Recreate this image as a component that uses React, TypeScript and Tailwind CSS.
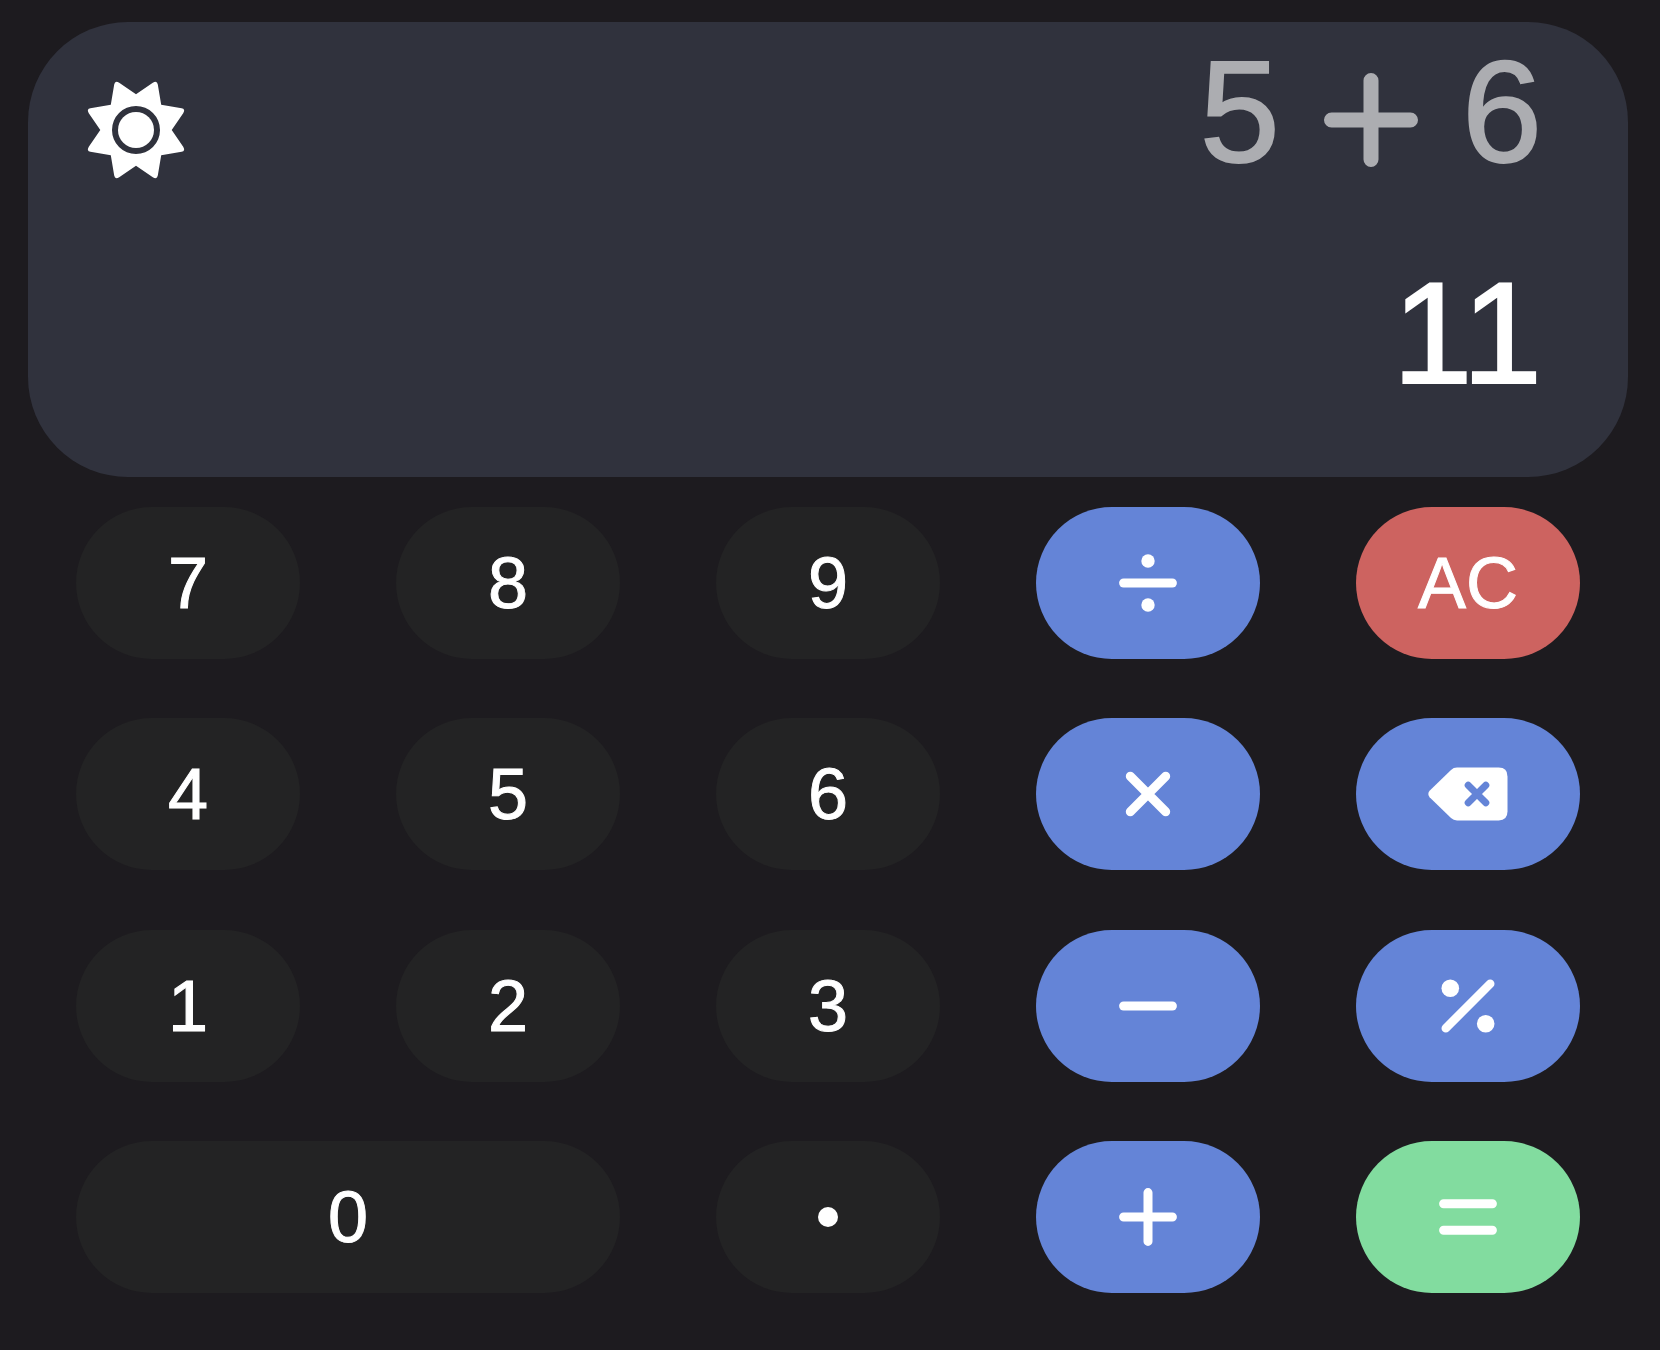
import type { ReactNode } from "react";

type Tone = "digit" | "operator" | "clear" | "equals";

type KeyDef = {
  label: string;
  content: ReactNode;
  tone: Tone;
  wide?: boolean;
};

const tones: Record<Tone, string> = {
  digit: "bg-[#232324]",
  operator: "bg-[#6484d7]",
  clear: "bg-[#cd6360]",
  equals: "bg-[#82dc9f]",
};

function Glyph({ children }: { children: ReactNode }) {
  return (
    <svg
      viewBox="-44 -44 88 88"
      className="size-[88px]"
      fill="none"
      stroke="currentColor"
      strokeWidth={9}
      strokeLinecap="round"
      strokeLinejoin="round"
      aria-hidden="true"
    >
      {children}
    </svg>
  );
}

const divide = (
  <Glyph>
    <path d="M-24.4 0H24.4" />
    <circle cy={-22} r={6.7} fill="currentColor" stroke="none" />
    <circle cy={22} r={6.7} fill="currentColor" stroke="none" />
  </Glyph>
);

const multiply = (
  <Glyph>
    <path d="M-17.7 -17.7L17.7 17.7M17.7 -17.7L-17.7 17.7" />
  </Glyph>
);

const minus = (
  <Glyph>
    <path d="M-24.4 0H24.4" />
  </Glyph>
);

const plus = (
  <Glyph>
    <path d="M-24.4 0H24.4M0 -24.4V24.4" />
  </Glyph>
);

const percent = (
  <Glyph>
    <path d="M-22.2 22.2L22.2 -22.2" strokeWidth={8.6} />
    <circle cx={-17.7} cy={-17.7} r={8.8} fill="currentColor" stroke="none" />
    <circle cx={17.7} cy={17.7} r={8.8} fill="currentColor" stroke="none" />
  </Glyph>
);

const equals = (
  <Glyph>
    <path d="M-24.4 -13.2H24.4M-24.4 13.2H24.4" />
  </Glyph>
);

const point = (
  <Glyph>
    <circle r={10} fill="currentColor" stroke="none" />
  </Glyph>
);

const backspace = (
  <Glyph>
    <path
      d="M-11 -26.4H30.7Q39.5 -26.4 39.5 -17.6V17.6Q39.5 26.4 30.7 26.4H-11Q-14.5 26.4 -17 24L-38.4 3.2Q-41 0 -38.4 -3.2L-17 -24Q-14.5 -26.4 -11 -26.4Z"
      fill="currentColor"
      stroke="none"
    />
    <path d="M0.2 -8.8L17.8 8.8M17.8 -8.8L0.2 8.8" stroke="#6484d7" strokeWidth={7} />
  </Glyph>
);

const keys: KeyDef[] = [
  { label: "7", content: "7", tone: "digit" },
  { label: "8", content: "8", tone: "digit" },
  { label: "9", content: "9", tone: "digit" },
  { label: "Divide", content: divide, tone: "operator" },
  { label: "AC", content: "AC", tone: "clear" },
  { label: "4", content: "4", tone: "digit" },
  { label: "5", content: "5", tone: "digit" },
  { label: "6", content: "6", tone: "digit" },
  { label: "Multiply", content: multiply, tone: "operator" },
  { label: "Backspace", content: backspace, tone: "operator" },
  { label: "1", content: "1", tone: "digit" },
  { label: "2", content: "2", tone: "digit" },
  { label: "3", content: "3", tone: "digit" },
  { label: "Subtract", content: minus, tone: "operator" },
  { label: "Percent", content: percent, tone: "operator" },
  { label: "0", content: "0", tone: "digit", wide: true },
  { label: "Decimal point", content: point, tone: "digit" },
  { label: "Add", content: plus, tone: "operator" },
  { label: "Equals", content: equals, tone: "equals" },
];

function SunIcon() {
  return (
    <svg viewBox="-48 -48 96 96" className="size-24 overflow-visible" aria-hidden="true">
      <path
        fill="currentColor"
        fillRule="evenodd"
        d="M0 -35.7L16.8 -47.2Q21 -49.8 21.8 -45.6L25.2 -25.2L45.6 -21.8Q49.8 -21 47.2 -16.8L35.7 0L47.2 16.8Q49.8 21 45.6 21.8L25.2 25.2L21.8 45.6Q21 49.8 16.8 47.2L0 35.7L-16.8 47.2Q-21 49.8 -21.8 45.6L-25.2 25.2L-45.6 21.8Q-49.8 21 -47.2 16.8L-35.7 0L-47.2 -16.8Q-49.8 -21 -45.6 -21.8L-25.2 -25.2L-21.8 -45.6Q-21 -49.8 -16.8 -47.2ZM24 0A24 24 0 1 0 -24 0A24 24 0 1 0 24 0Z"
      />
      <circle r={18} fill="currentColor" />
    </svg>
  );
}

function Display() {
  return (
    <section
      aria-label="Display"
      className="flex items-start justify-between rounded-[100px] bg-[#30323d] pr-[86px] pb-[71px] pl-[60px]"
    >
      <button type="button" aria-label="Switch theme" className="mt-[60px]">
        <SunIcon />
      </button>
      <div className="flex flex-col items-end gap-[77px] pt-[19px] text-[144px] leading-none [-webkit-text-stroke:2px_currentColor]">
        <p className="flex items-end text-[#acadb1]">
          <span>5</span>
          <svg
            viewBox="-65 -65 130 130"
            className="mx-[26px] size-[130px]"
            fill="none"
            stroke="currentColor"
            strokeWidth={15}
            strokeLinecap="round"
            role="img"
            aria-label="plus"
          >
            <path d="M-39.5 0H39.5M0 -39.5V39.5" />
          </svg>
          <span>6</span>
        </p>
        <output>11</output>
      </div>
    </section>
  );
}

export default function App() {
  return (
    <main className="flex min-h-screen flex-col gap-[30px] bg-[#1d1b1f] pt-[22px] pr-8 pb-[57px] pl-7 font-['Liberation_Sans',Arial,sans-serif] text-white">
      <Display />
      <div className="grid flex-1 grid-cols-5 content-between gap-x-24 gap-y-4 px-12">
        {keys.map((key) => (
          <button
            key={key.label}
            type="button"
            aria-label={key.label}
            className={`flex h-[152px] items-center justify-center rounded-full text-7xl leading-none [-webkit-text-stroke:1px_currentColor] ${tones[key.tone]} ${key.wide ? "col-span-2" : ""}`}
          >
            {key.content}
          </button>
        ))}
      </div>
    </main>
  );
}
